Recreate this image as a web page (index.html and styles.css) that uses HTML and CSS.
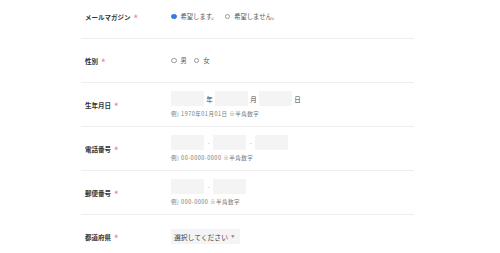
FILE: index.html
```html
<!DOCTYPE html>
<html>
<head>
    <title>Entry Form</title>
    <link rel="stylesheet" href="styles.css">
</head>
<body>
    <form class="entry-form">
        <div class="row">
            <div class="label">メールマガジン<span class="req">*</span></div>
            <div class="field choices">
                <label class="radio"><span class="dot checked"></span>希望します。</label>
                <label class="radio"><span class="dot"></span>希望しません。</label>
            </div>
        </div>
        <div class="row">
            <div class="label">性別<span class="req">*</span></div>
            <div class="field choices">
                <label class="radio"><span class="dot"></span>男</label>
                <label class="radio"><span class="dot"></span>女</label>
            </div>
        </div>
        <div class="row">
            <div class="label">生年月日<span class="req">*</span></div>
            <div class="field">
                <div class="inputs">
                    <span class="box"></span><span class="unit">年</span>
                    <span class="box"></span><span class="unit">月</span>
                    <span class="box"></span><span class="unit">日</span>
                </div>
                <p class="hint">例) 1970年01月01日 ※半角数字</p>
            </div>
        </div>
        <div class="row">
            <div class="label">電話番号<span class="req">*</span></div>
            <div class="field">
                <div class="inputs">
                    <span class="box"></span><span class="sep">-</span>
                    <span class="box"></span><span class="sep">-</span>
                    <span class="box"></span>
                </div>
                <p class="hint">例) 00-0000-0000 ※半角数字</p>
            </div>
        </div>
        <div class="row">
            <div class="label">郵便番号<span class="req">*</span></div>
            <div class="field">
                <div class="inputs">
                    <span class="box"></span><span class="sep">-</span>
                    <span class="box"></span>
                </div>
                <p class="hint">例) 000-0000 ※半角数字</p>
            </div>
        </div>
        <div class="row last">
            <div class="label">都道府県<span class="req">*</span></div>
            <div class="field">
                <span class="select">選択してください<span class="arrow">▼</span></span>
            </div>
        </div>
    </form>
</body>
</html>
```

FILE: styles.css
```css
body {
    margin: 0;
    background-color: #fff;
    font-family: "Noto Sans CJK JP", "Noto Sans", sans-serif;
    color: #333;
}

.entry-form {
    width: 333px;
    margin: -5px 0 0 81px;
}

.row {
    display: flex;
    align-items: center;
    height: 43px;
    border-bottom: 1px solid #eeeeee;
}

.row.last {
    border-bottom: none;
}

.label {
    display: flex;
    align-items: center;
    width: 86px;
    padding-left: 4px;
    font-size: 6.5px;
    font-weight: bold;
    color: #333;
}

.req {
    color: #f08aa0;
    margin-left: 3px;
    font-size: 9px;
    line-height: 1;
    font-weight: bold;
    position: relative;
    top: 1.5px;
}

.field {
    display: flex;
    flex-direction: column;
    font-size: 6.3px;
    color: #555;
}

.field.choices {
    flex-direction: row;
}

.radio {
    display: inline-flex;
    align-items: center;
    margin-right: 7px;
}

.dot {
    width: 3.5px;
    height: 3.5px;
    border: 0.7px solid #999;
    border-radius: 50%;
    margin-right: 4px;
    box-sizing: content-box;
}

.dot.checked {
    border-color: #2f7de1;
    background-color: #2f7de1;
}

.inputs {
    display: flex;
    align-items: center;
}

.box {
    width: 33px;
    height: 15px;
    background-color: #f4f4f4;
}

.unit {
    width: 11px;
    text-align: center;
    font-size: 6.5px;
    color: #444;
}

.sep {
    width: 9px;
    text-align: center;
    color: #aaa;
}

.hint {
    margin: 4px 0 0;
    font-size: 5.5px;
    letter-spacing: 0.5px;
    color: #777;
}

.select {
    display: inline-flex;
    align-items: center;
    height: 15px;
    padding: 0 6px 0 3px;
    background-color: #f4f4f4;
    font-size: 6.8px;
    color: #444;
}

.arrow {
    font-size: 3.5px;
    color: #888;
    margin-left: 3px;
}
```
